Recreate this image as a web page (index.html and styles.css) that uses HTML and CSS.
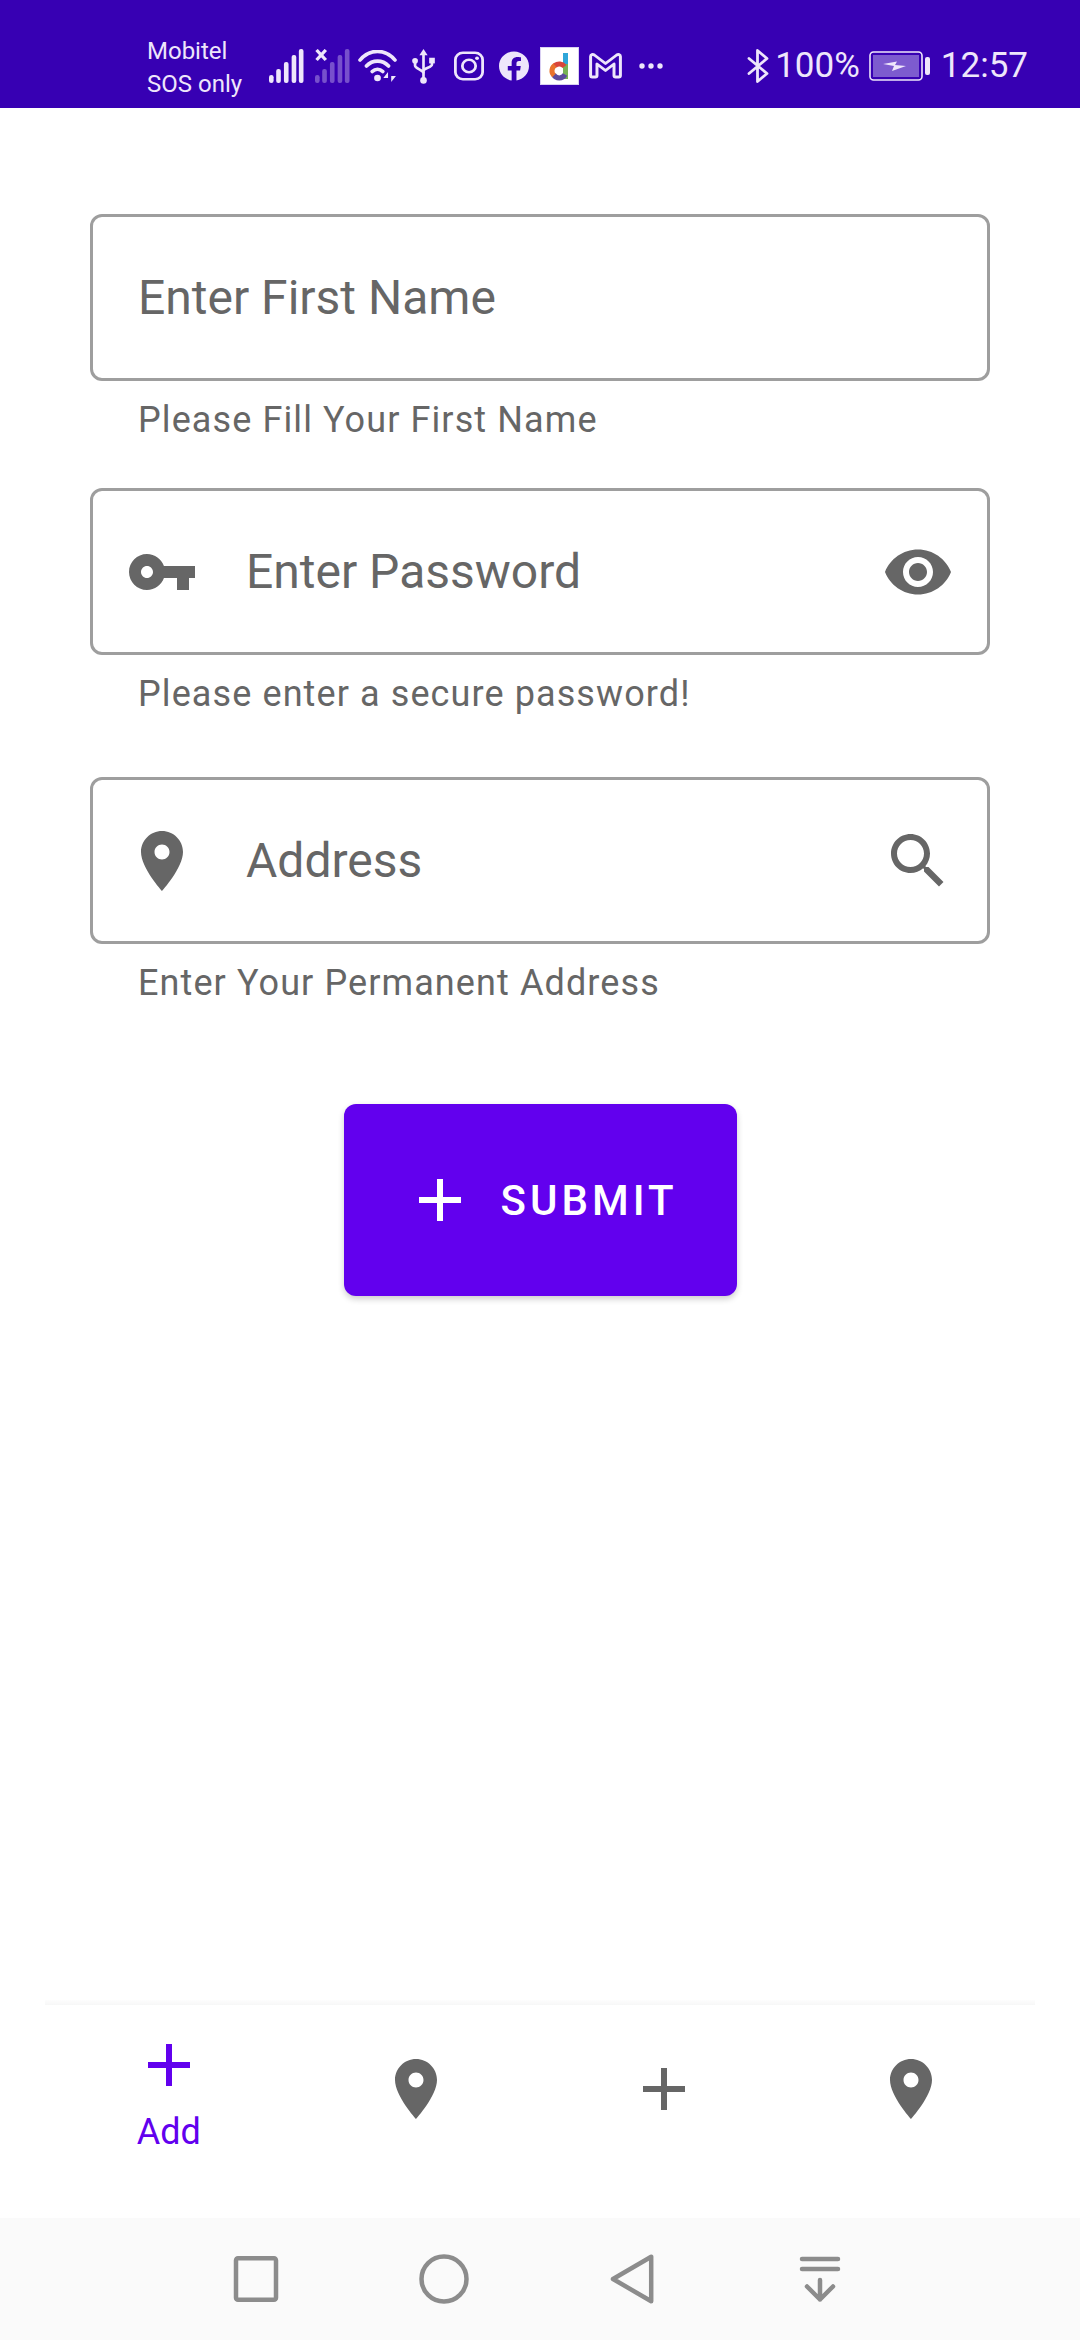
FILE: index.html
```html
<!DOCTYPE html>
<html lang="en">
<head>
  <meta charset="UTF-8" />
  <meta name="viewport" content="width=device-width, initial-scale=1.0" />
  <title>Text Fields</title>
  <link rel="stylesheet" href="styles.css">
</head>
<body>
  <div class="page">
    <!-- status bar -->
    <div class="status-bar">
      <div class="carrier">
        <span>Mobitel</span>
        <span>SOS only</span>
      </div>
      <div class="status-icons">
        <span class="status-cell">
          <svg width="35" height="34" viewBox="0 0 34 34" preserveAspectRatio="none" fill="#eee6fb">
            <rect x="0" y="26" width="4.5" height="8" rx="2.2"/>
            <rect x="7" y="20" width="4.5" height="14" rx="2"/>
            <rect x="14.500" y="13" width="4.500" height="21" rx="2"/>
            <rect x="22" y="6" width="4.500" height="28" rx="2"/>
            <rect x="29" y="0" width="4.500" height="34" rx="2"/>
          </svg>
        </span>
        <span class="status-cell">
          <svg width="35" height="34" viewBox="0 0 34 34" preserveAspectRatio="none">
            <g fill="#eee6fb" opacity="0.35">
              <rect x="0" y="26" width="4.5" height="8" rx="2.2"/>
              <rect x="7" y="20" width="4.5" height="14" rx="2"/>
              <rect x="14.500" y="13" width="4.500" height="21" rx="2"/>
              <rect x="22" y="6" width="4.500" height="28" rx="2"/>
              <rect x="29" y="0" width="4.500" height="34" rx="2"/>
            </g>
            <path d="M1.500 1l9 10M10.500 1l-9 10" stroke="#eee6fb" stroke-width="3.200" fill="none"/>
          </svg>
        </span>
        <span class="status-cell">
          <svg width="39" height="32" viewBox="0 0 37 32" preserveAspectRatio="none" fill="none" stroke="#eee6fb" stroke-width="3.600" stroke-linecap="round">
            <path d="M2 10C11-1.500 26-1.500 35 10"/>
            <path d="M8 16c6-6.500 15-6.500 21 0"/>
            <path d="M13.500 21.500c3-3 7-3 10 0"/>
            <circle cx="18.500" cy="28" r="3.200" fill="#eee6fb" stroke="none"/>
            <path d="M28.500 22l-4.500 6h4.500zM31.500 22v10l4.500-6h-4.500z" fill="#eee6fb" stroke="none"/>
          </svg>
        </span>
        <span class="status-cell">
          <svg width="23" height="35" viewBox="0 0 22 34" fill="none" stroke="#eee6fb" stroke-width="2.600">
            <path d="M11 3v28"/>
            <path d="M11 0l4 6H7z" fill="#eee6fb" stroke="none"/>
            <circle cx="11" cy="30.500" r="3.200" fill="#eee6fb" stroke="none"/>
            <circle cx="2.800" cy="11.500" r="2.800" fill="#eee6fb" stroke="none"/>
            <rect x="16.500" y="8.500" width="5.500" height="5.500" fill="#eee6fb" stroke="none"/>
            <path d="M2.800 12v4c0 3 8.200 4.500 8.200 7.500M19.200 12v3c0 3-8.200 3.500-8.200 6.500"/>
          </svg>
        </span>
        <span class="status-cell">
          <svg width="30" height="30" viewBox="0 0 28 30" preserveAspectRatio="none" fill="none" stroke="#eee6fb" stroke-width="2.600">
            <rect x="1.300" y="1.800" width="25.400" height="26.400" rx="7"/>
            <circle cx="14" cy="15" r="6.200"/>
            <circle cx="21.500" cy="7.300" r="1.800" fill="#eee6fb" stroke="none"/>
          </svg>
        </span>
        <span class="status-cell">
          <svg width="30" height="30" viewBox="0 0 28 30" preserveAspectRatio="none">
            <path fill="#eee6fb" d="M14 .5C6.300.5 0 6.900 0 15c0 7.200 5 13.300 11.800 14.500V19.400H8.200v-4.400h3.600v-3.300c0-3.700 2.200-5.800 5.500-5.800 1.600 0 3.200.3 3.200.3v3.700h-1.800c-1.800 0-2.400 1.200-2.400 2.400v2.700h4l-.6 4.400h-3.400v10.100C23 28.300 28 22.200 28 15 28 6.900 21.700.5 14 .5z"/>
          </svg>
        </span>
        <span class="status-cell">
          <svg class="d-logo" width="37" height="36" viewBox="0 0 37 36" fill="none" stroke-width="5">
            <path d="M24.500 5v11" stroke="#2ea6d9"/>
            <path d="M24.500 16v15" stroke="#77b255"/>
            <path d="M24 26.500A6.500 6.500 0 0 1 12.500 26.500" stroke="#5b4a9e"/>
            <path d="M13 27.500A6.500 6.500 0 0 1 14.500 17" stroke="#e8722c"/>
            <path d="M14 17.500A6.500 6.500 0 0 1 23.500 18.500" stroke="#d9453b"/>
          </svg>
        </span>
        <span class="status-cell">
          <svg width="33" height="26" viewBox="0 0 31 26" preserveAspectRatio="none" fill="none" stroke="#eee6fb" stroke-width="2.800" stroke-linejoin="round">
            <path d="M1.500 3.500c0-2 2-2.500 3.500-1.500l10.500 8.500L26 2c1.500-1 3.500-.500 3.500 1.500v19c0 1-.5 1.500-1.500 1.500h-3c-1 0-1.500-.5-1.500-1.500V11l-8 6.500-8-6.500v11.500c0 1-.5 1.500-1.500 1.500H3c-1 0-1.500-.5-1.500-1.500z"/>
          </svg>
        </span>
        <span class="status-cell">
          <svg width="24" height="6" viewBox="0 0 24 6" fill="#eee6fb">
            <circle cx="3" cy="3" r="2.700"/>
            <circle cx="12" cy="3" r="2.700"/>
            <circle cx="21" cy="3" r="2.700"/>
          </svg>
        </span>
      </div>
      <div class="status-right">
        <svg class="bt-icon" width="22" height="34" viewBox="0 0 22 34" fill="none" stroke="#eee6fb" stroke-width="2.800" stroke-linecap="round" stroke-linejoin="round">
          <path d="M2 9.500l18 15-9.500 8V1.500l9.500 8-18 15"/>
        </svg>
        <span class="percent">100%</span>
        <svg class="battery" width="61" height="30" viewBox="0 0 61 30">
          <rect x="1" y="1" width="52" height="28" rx="3.500" fill="none" stroke="#eee6fb" stroke-width="1.600"/>
          <rect x="4" y="4" width="46" height="22" fill="#7d5bcf"/>
          <path d="M14 13l14-2.500-2 3.500 11 1-14 5 2-5z" fill="#eee6fb"/>
          <rect x="56" y="6" width="5" height="18" rx="2" fill="#eee6fb"/>
        </svg>
        <span class="clock">12:57</span>
      </div>
    </div>

    <!-- form -->
    <div class="content">
      <div class="field-group">
        <div class="field field-plain">
          <span class="field-text">Enter First Name</span>
        </div>
        <div class="helper">Please Fill Your First Name</div>
      </div>

      <div class="field-group field-group-wide">
        <div class="field">
          <svg class="icon" viewBox="0 0 24 24"><path d="M12.650 10C11.830 7.670 9.610 6 7 6c-3.310 0-6 2.690-6 6s2.690 6 6 6c2.610 0 4.830-1.670 5.650-4H17v4h4v-4h2v-4H12.650zM7 14c-1.100 0-2-.9-2-2s.9-2 2-2 2 .9 2 2-.9 2-2 2z"/></svg>
          <span class="field-text">Enter Password</span>
          <svg class="icon" viewBox="0 0 24 24"><path d="M12 4.500C7 4.500 2.730 7.610 1 12c1.730 4.390 6 7.500 11 7.500s9.270-3.110 11-7.500c-1.730-4.390-6-7.500-11-7.500zM12 17c-2.760 0-5-2.240-5-5s2.240-5 5-5 5 2.240 5 5-2.240 5-5 5zm0-8c-1.660 0-3 1.340-3 3s1.340 3 3 3 3-1.340 3-3-1.340-3-3-3z"/></svg>
        </div>
        <div class="helper">Please enter a secure password!</div>
      </div>

      <div class="field-group">
        <div class="field">
          <svg class="icon" viewBox="0 0 24 24"><path d="M12 2C8.130 2 5 5.130 5 9c0 5.250 7 13 7 13s7-7.750 7-13c0-3.870-3.130-7-7-7zm0 9.500c-1.380 0-2.500-1.120-2.500-2.500s1.120-2.500 2.500-2.500 2.500 1.120 2.500 2.500-1.120 2.500-2.500 2.500z"/></svg>
          <span class="field-text">Address</span>
          <svg class="icon" viewBox="0 0 24 24"><path d="M15.500 14h-.79l-.28-.27C15.410 12.590 16 11.110 16 9.500 16 5.910 13.090 3 9.500 3S3 5.910 3 9.500 5.910 16 9.500 16c1.610 0 3.090-.59 4.230-1.570l.27.28v.79l5 4.990L20.490 19l-4.990-5zm-6 0C7.010 14 5 11.990 5 9.500S7.010 5 9.500 5 14 7.010 14 9.500 11.990 14 9.500 14z"/></svg>
        </div>
        <div class="helper">Enter Your Permanent Address</div>
      </div>

      <div class="button-row">
        <button class="submit-btn" type="button">
          <svg class="icon icon-white" viewBox="0 0 24 24"><path d="M19 13h-6v6h-2v-6H5v-2h6V5h2v6h6v2z"/></svg>
          <span>SUBMIT</span>
        </button>
      </div>
    </div>

    <!-- bottom navigation -->
    <div class="tab-bar">
      <div class="tab-line"></div>
      <div class="tabs">
        <div class="tab tab-active">
          <svg class="icon icon-purple" viewBox="0 0 24 24"><path d="M19 13h-6v6h-2v-6H5v-2h6V5h2v6h6v2z"/></svg>
          <span class="tab-label">Add</span>
        </div>
        <div class="tab">
          <svg class="icon" viewBox="0 0 24 24"><path d="M12 2C8.130 2 5 5.130 5 9c0 5.250 7 13 7 13s7-7.750 7-13c0-3.870-3.130-7-7-7zm0 9.500c-1.380 0-2.500-1.120-2.500-2.500s1.120-2.500 2.500-2.500 2.500 1.120 2.500 2.500-1.120 2.500-2.500 2.500z"/></svg>
        </div>
        <div class="tab">
          <svg class="icon" viewBox="0 0 24 24"><path d="M19 13h-6v6h-2v-6H5v-2h6V5h2v6h6v2z"/></svg>
        </div>
        <div class="tab">
          <svg class="icon" viewBox="0 0 24 24"><path d="M12 2C8.130 2 5 5.130 5 9c0 5.250 7 13 7 13s7-7.750 7-13c0-3.870-3.130-7-7-7zm0 9.500c-1.380 0-2.500-1.120-2.500-2.500s1.120-2.500 2.500-2.500 2.500 1.120 2.500 2.500-1.120 2.500-2.500 2.500z"/></svg>
        </div>
      </div>
    </div>

    <!-- system navigation -->
    <div class="system-nav">
      <svg width="60" height="60" viewBox="0 0 60 60" fill="none" stroke="#8c8c8c" stroke-width="4.500" stroke-linejoin="round">
        <rect x="10" y="9.250" width="40" height="41.500" rx="2"/>
      </svg>
      <svg width="60" height="60" viewBox="0 0 60 60" fill="none" stroke="#8c8c8c" stroke-width="4.500">
        <circle cx="30" cy="30" r="22.500"/>
      </svg>
      <svg width="60" height="60" viewBox="0 0 60 60" fill="none" stroke="#8c8c8c" stroke-width="4.500" stroke-linejoin="round">
        <path d="M49.200 7.750v44.500L11 30z"/>
      </svg>
      <svg width="60" height="60" viewBox="0 0 60 60" fill="none" stroke="#8c8c8c" stroke-width="4.500" stroke-linecap="round" stroke-linejoin="round">
        <path d="M12 10h36M12 20h36M30 31v19.500M17 37.500l13 13 13-13"/>
      </svg>
    </div>
  </div>
</body>
</html>
```

FILE: styles.css
```css
body {
  margin: 0;
  background: #fff;
  font-family: Roboto, "Liberation Sans", sans-serif;
  color: #666;
}
.page {
  width: 1080px;
  height: 2340px;
  display: flex;
  flex-direction: column;
  overflow: hidden;
}

/* status bar */
.status-bar {
  height: 108px;
  flex: none;
  background: #3700b3;
  color: #eee6fb;
  display: flex;
  align-items: center;
  padding: 24px 52px 0 147px;
  box-sizing: border-box;
}
.carrier {
  width: 117px;
  padding-top: 3px;
  display: flex;
  flex-direction: column;
  font-size: 24px;
  line-height: 33px;
  white-space: nowrap;
}
.status-icons {
  display: flex;
  align-items: center;
}
.status-cell {
  width: 45.5px;
  height: 40px;
  display: flex;
  align-items: center;
  justify-content: center;
}
.d-logo {
  background: #fff;
  outline: 1px solid #d9cff2;
}
.status-right {
  margin-left: auto;
  display: flex;
  align-items: center;
  font-size: 35px;
  line-height: 40px;
}
.bt-icon {
  margin-right: 6px;
}
.battery {
  margin: 0 11px 0 9px;
}

/* form */
.content {
  flex: 1;
  padding: 106px 90px 0;
}
.field-group {
  margin-bottom: 46px;
}
.field-group-wide {
  margin-bottom: 61px;
}
.field {
  height: 167px;
  box-sizing: border-box;
  border: 3px solid #9e9e9e;
  border-radius: 12px;
  display: flex;
  align-items: center;
  padding: 0 33px;
}
.field-plain {
  padding-left: 45px;
}
.field-text {
  flex: 1;
  font-size: 48px;
  line-height: 60px;
}
.icon + .field-text {
  margin-left: 48px;
}
.helper {
  margin-top: 17px;
  padding-left: 48px;
  font-size: 36px;
  line-height: 44px;
  letter-spacing: 1.1px;
}
.icon {
  width: 72px;
  height: 72px;
  flex: none;
  fill: #666;
}
.icon-white {
  fill: #fff;
}
.icon-purple {
  fill: #6200ee;
}
.button-row {
  display: flex;
  justify-content: center;
  margin-top: 99px;
}
.submit-btn {
  height: 192px;
  width: 393px;
  box-sizing: border-box;
  border: 0;
  border-radius: 12px;
  background: #6200ee;
  color: #fff;
  display: flex;
  align-items: center;
  gap: 25px;
  padding: 0 0 0 60px;
  font-family: inherit;
  font-size: 42px;
  font-weight: 500;
  letter-spacing: 4px;
  box-shadow: 0 3px 6px rgba(0, 0, 0, 0.2);
}

/* bottom navigation */
.tab-bar {
  height: 218px;
  flex: none;
  background: #fff;
}
.tab-line {
  height: 5px;
  margin: 0 45px;
  background: linear-gradient(#fdfdfd, #f7f7f7);
}
.tabs {
  display: grid;
  grid-template-columns: repeat(4, 1fr);
  padding: 0 45px;
}
.tab {
  height: 167px;
  display: flex;
  flex-direction: column;
  align-items: center;
  justify-content: center;
}
.tab-active {
  justify-content: flex-start;
  padding-top: 24px;
  box-sizing: border-box;
  color: #6200ee;
}
.tab-label {
  margin-top: 9px;
  font-size: 36px;
  line-height: 44px;
}

/* system navigation */
.system-nav {
  height: 122px;
  flex: none;
  background: #fafafa;
  display: flex;
  justify-content: center;
  align-items: center;
  gap: 128px;
  padding-right: 4px;
  box-sizing: border-box;
}
```
